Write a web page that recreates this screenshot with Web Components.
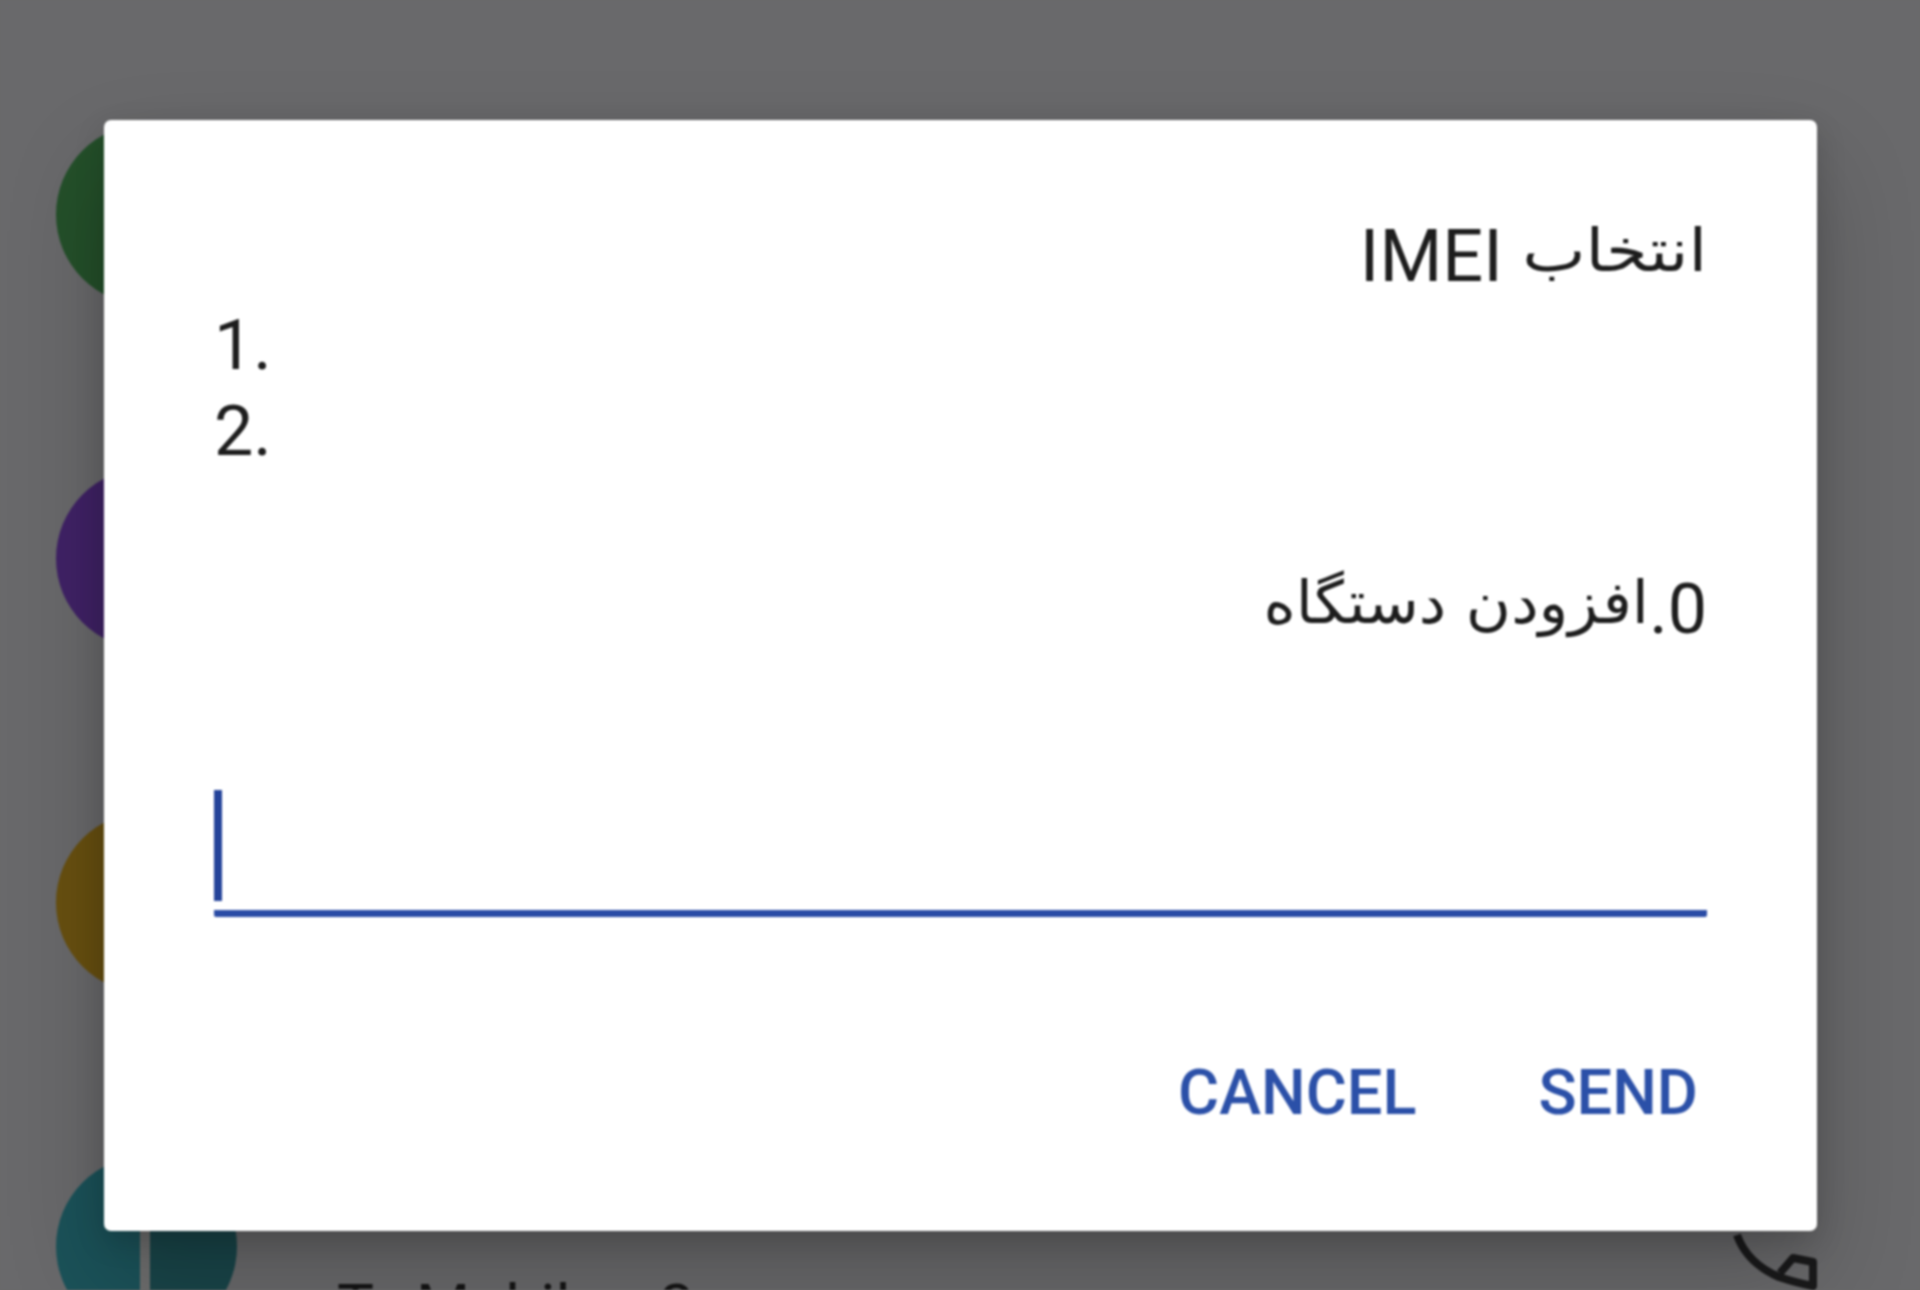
<!DOCTYPE html>
<html>
<head>
<meta charset="utf-8">
<title>IMEI</title>
<style>
    html, body { margin: 0; padding: 0; background: #69696b; }
</style>
</head>
<body>
<contact-page>
    <contact-row color="#24502a"></contact-row>
    <contact-row color="#402266"></contact-row>
    <contact-row color="#685010"></contact-row>
    <contact-row color="linear-gradient(90deg, #1b5259 50%, #194549 50%)" split name="Mobile" num="2" lead="T" phone></contact-row>
    <imei-dialog slot="overlay">
        <fa-text slot="title" scale="1.14" pad="42">انتخاب</fa-text>
        <span slot="title">IMEI</span>
        <span slot="item">1.</span>
        <span slot="item">2.</span>
        <span slot="message">0.</span>
        <fa-text slot="message" scale="1.045" pad="18">افزودن دستگاه</fa-text>
    </imei-dialog>
</contact-page>

<script>
class ContactPage extends HTMLElement {
    constructor() {
        super();
        this.shadow = this.attachShadow({ mode: 'open' });
        this.shadow.innerHTML = `
            <style>
                :host {
                    display: block;
                    position: relative;
                    width: 1920px;
                    height: 1290px;
                    overflow: hidden;
                    background: #69696b;
                    filter: blur(0.8px);
                }
                .list {
                    display: flex;
                    flex-direction: column;
                    padding-top: 42px;
                }
            </style>
            <div class="list"><slot></slot></div>
            <slot name="overlay"></slot>
        `;
    }
}
customElements.define('contact-page', ContactPage);

class ContactRow extends HTMLElement {
    constructor() {
        super();
        this.shadow = this.attachShadow({ mode: 'open' });
    }

    connectedCallback() {
        const color = this.getAttribute('color');
        const name = this.getAttribute('name');
        const text = name ? `
            <div class="text">
                <span class="lead">${this.getAttribute('lead')}</span>
                <span class="name">${name}</span>
                <span class="num">${this.getAttribute('num')}</span>
            </div>` : '';
        const phone = this.hasAttribute('phone') ? `
            <svg class="phone" viewBox="0 0 90 70" width="90" height="70">
                <path d="M4 4 Q14 32 46 46 Q64 52 80 55 L80 31 L60 27 L47 42" fill="none" stroke="#1a1a1b" stroke-width="8" stroke-linejoin="round"/>
            </svg>` : '';
        const bar = this.hasAttribute('split') ? '<div class="bar"></div>' : '';
        this.shadow.innerHTML = `
            <style>
                :host {
                    display: flex;
                    align-items: center;
                    height: 344px;
                    padding-left: 56px;
                    color: #141414;
                    font-family: Roboto, sans-serif;
                    font-size: 62px;
                }
                .avatar {
                    flex: none;
                    display: flex;
                    justify-content: center;
                    width: 181px;
                    height: 181px;
                    border-radius: 50%;
                    background: ${color};
                }
                .bar {
                    width: 10px;
                    margin-right: 4px;
                    background: #6e6e6e;
                }
                .text {
                    display: flex;
                    align-self: flex-start;
                    margin: 196px 0 0 100px;
                    line-height: 73px;
                }
                .name { margin-left: 42px; }
                .num { margin-left: 56px; }
                .phone {
                    align-self: flex-start;
                    margin: 157px 97px 0 auto;
                }
            </style>
            <div class="avatar">${bar}</div>
            ${text}
            ${phone}
        `;
    }
}
customElements.define('contact-row', ContactRow);

// persian runs sit smaller, wider and higher than the latin next to them
class FaText extends HTMLElement {
    constructor() {
        super();
        this.shadow = this.attachShadow({ mode: 'open' });
    }

    connectedCallback() {
        this.shadow.innerHTML = `
            <style>
                :host {
                    display: inline-block;
                    direction: rtl;
                    font-family: "DejaVu Sans", sans-serif;
                    font-size: 59px;
                    vertical-align: 10px;
                    line-height: 1;
                    margin-left: ${this.getAttribute('pad')}px;
                    transform-origin: right center;
                    transform: scaleX(${this.getAttribute('scale')});
                }
            </style>
            <slot></slot>
        `;
    }
}
customElements.define('fa-text', FaText);

class ImeiDialog extends HTMLElement {
    constructor() {
        super();
        this.shadow = this.attachShadow({ mode: 'open' });
        this.shadow.innerHTML = `
            <style>
                :host {
                    position: absolute;
                    left: 104px;
                    top: 120px;
                    width: 1713px;
                    height: 1111px;
                    box-sizing: border-box;
                    display: flex;
                    flex-direction: column;
                    padding: 95px 110px 0;
                    background: #fff;
                    border-radius: 7px;
                    color: #1d1d1d;
                    font-family: Roboto, "DejaVu Sans", sans-serif;
                    font-size: 70px;
                    box-shadow: 0 48px 100px rgba(0,0,0,.2), 0 10px 30px rgba(0,0,0,.16);
                }
                .title, .message {
                    direction: rtl;
                    line-height: 84px;
                    height: 84px;
                }
                .title { font-size: 72px; }
                .list {
                    display: flex;
                    flex-direction: column;
                    margin-top: 3px;
                    line-height: 86px;
                }
                ::slotted([slot="item"]) { display: block; }
                .message { margin-top: 93px; }
                .field {
                    margin-top: 139px;
                    height: 120px;
                    border-bottom: 7px solid #2a4ca6;
                    border-radius: 0 0 2px 2px;
                }
                .cursor {
                    width: 8px;
                    height: 111px;
                    background: #24439a;
                }
                .actions {
                    display: flex;
                    justify-content: flex-end;
                    gap: 122px;
                    margin-top: 139px;
                    padding-right: 9px;
                    color: #2b50a8;
                    font-size: 63px;
                    font-weight: 500;
                    line-height: 73px;
                }
            </style>
            <div class="title"><slot name="title"></slot></div>
            <div class="list"><slot name="item"></slot></div>
            <div class="message"><slot name="message"></slot></div>
            <div class="field"><div class="cursor"></div></div>
            <div class="actions">
                <span>CANCEL</span>
                <span>SEND</span>
            </div>
        `;
    }
}
customElements.define('imei-dialog', ImeiDialog);
</script>
</body>
</html>
